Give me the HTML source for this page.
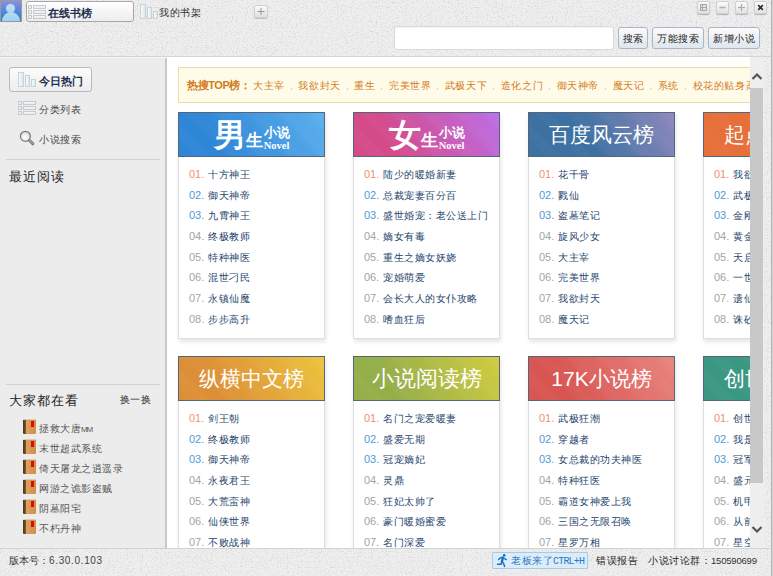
<!DOCTYPE html>
<html><head><meta charset="utf-8">
<style>
*{margin:0;padding:0;box-sizing:border-box}
html,body{width:773px;height:576px;overflow:hidden;font-family:"Liberation Sans",sans-serif;font-size:12px;color:#333}
body{position:relative;background:#eeeeee}
.a{position:absolute}
.tex{background:transparent}
#hdr{left:0;top:0;width:773px;height:57px}
#hdrline{left:0;top:56px;width:773px;height:1px;background:#d4d4d4}
#side{left:0;top:57px;width:165px;height:491px;background:#ececec}
#sideb{left:165px;top:57px;width:2px;height:491px;background:#c8c8c8}
#sideb2{left:166px;top:57px;width:1px;height:491px;background:#f4f4f4}
#main{left:167px;top:57px;width:583px;height:491px;background:#fff;overflow:hidden}
#rstrip{left:764px;top:57px;width:9px;height:491px}
#rborder{left:771px;top:0;width:2px;height:576px;background:linear-gradient(90deg,#b4b4b4 50%,#d4d4d4 50%)}
#status{left:0;top:548px;width:773px;height:28px}
#statusline{left:0;top:548px;width:773px;height:1px;background:#d2d2d2}
.card{position:absolute;width:147px;height:227px;background:#fff;border:1px solid #dedede;box-shadow:1px 3px 4px rgba(0,0,0,.10)}
.card .h{position:absolute;left:-1px;top:-1px;width:147px;height:45px;color:#fff;font-size:21px;text-align:center;line-height:44px;border:1px solid #55657a;overflow:hidden;white-space:nowrap}
.card ul{position:absolute;left:10px;top:51px;list-style:none}
.card li{height:20.7px;line-height:20.7px;font-size:10px;letter-spacing:0.5px;color:#25446c;white-space:nowrap}
.card li b{font-weight:normal;color:#a4a4a4;margin-right:4px;font-size:11px;letter-spacing:0}
.card li.r b{color:#f4906c}
.card li.bl b{color:#4e9ad6}
.btn{position:absolute;border:1px solid #a9b6c6;border-radius:3px;background:linear-gradient(#fbfbfb,#dfe6ee);font-size:10px;letter-spacing:0.5px;color:#222;text-align:center;line-height:21px;white-space:nowrap}
.wb{position:absolute;top:1px;width:13px;height:13px;border-radius:2px;background:linear-gradient(#fafafa,#e2e2e2);box-shadow:0 1px 1px rgba(0,0,0,.25);border:1px solid #d0d0d0}
.hot{font-size:10px;letter-spacing:0.6px;color:#d27b1e;line-height:14px;white-space:nowrap}
.hot .lbl{display:inline-block;width:66px;font-size:11px;letter-spacing:-0.4px}
.hot .sep{display:inline-block;width:13.5px;text-align:center;font-style:normal;color:#d9c9a9;font-size:9px}
.card .h:after{content:"";position:absolute;left:0;top:0;right:0;bottom:0;background:repeating-linear-gradient(45deg,rgba(255,255,255,0) 0,rgba(255,255,255,0) 12px,rgba(255,255,255,.025) 12px,rgba(255,255,255,.025) 22px)}
.card .h span{position:relative;z-index:1}
</style></head><body>
<svg class="a" style="left:0;top:0" width="773" height="576"><filter id="nz" x="0" y="0" width="100%" height="100%"><feTurbulence type="fractalNoise" baseFrequency="0.8" numOctaves="2" seed="5"/><feColorMatrix type="matrix" values="0 0 0 0 0  0 0 0 0 0  0 0 0 0 0  4 0 0 0 -2.1"/></filter><rect width="773" height="576" filter="url(#nz)" opacity="0.09"/></svg>
<div id="hdr" class="a tex"></div>
<div id="hdrline" class="a"></div>
<div class="a" style="left:0;top:57px;width:167px;height:1px;background:#f7f7f7;z-index:2"></div>

<!-- avatar -->
<div class="a" style="left:0;top:0;width:22px;height:22px;background:#9a9a9a;padding:1px">
  <div style="width:20px;height:20px;background:linear-gradient(#8a8ee0,#3f86d8 70%,#2e7ad0);position:relative;overflow:hidden">
    <div style="position:absolute;left:5px;top:3px;width:9px;height:9px;border-radius:50%;background:linear-gradient(#c4e0f4,#a8d4f4)"></div>
    <div style="position:absolute;left:1px;top:11px;width:18px;height:14px;border-radius:9px 9px 0 0;background:linear-gradient(#b4dcf4,#8ccef4)"></div>
  </div>
</div>
<!-- tab 1 -->
<div class="a" style="left:26px;top:1px;width:108px;height:21px;border:1px solid #a8a8a8;border-radius:3px;background:linear-gradient(#ffffff,#ededed)">
  <svg class="a" style="left:1px;top:3px" width="19" height="15" viewBox="0 0 19 15">
    <defs><linearGradient id="lg" x1="0" y1="0" x2="0" y2="1"><stop offset="0" stop-color="#f8fafa"/><stop offset="1" stop-color="#dcecf0"/></linearGradient></defs><g fill="url(#lg)" stroke="#c6cacc" stroke-width="1">
    <rect x="0.5" y="0.5" width="3" height="3"/><rect x="0.5" y="5.5" width="3" height="3"/><rect x="0.5" y="10.5" width="3" height="3"/>
    <rect x="5.5" y="0.5" width="12" height="3"/><rect x="5.5" y="5.5" width="12" height="3"/><rect x="5.5" y="10.5" width="12" height="3"/>
    </g>
  </svg>
  <div class="a" style="left:21px;top:4px;font-size:11px;font-weight:bold;color:#1e2f4e;line-height:14px">在线书榜</div>
</div>
<!-- tab 2 -->
<svg class="a" style="left:140px;top:4px" width="18" height="15" viewBox="0 0 18 15"><defs><linearGradient id="bg2" x1="0" y1="0" x2="1" y2="0"><stop offset="0" stop-color="#fbfdfd"/><stop offset="1" stop-color="#d6e6ec"/></linearGradient></defs><g fill="url(#bg2)" stroke="#cbd1d4" stroke-width="1">
    <rect x="0.5" y="0.5" width="5" height="14"/><rect x="7.5" y="3.5" width="4" height="11"/><rect x="13.5" y="7.5" width="4" height="7"/>
    </g></svg>
<div class="a" style="left:159px;top:6px;font-size:10px;letter-spacing:0.5px;color:#333;line-height:14px">我的书架</div>
<div class="a" style="left:254px;top:5px;width:14px;height:13px;border-radius:2px;background:linear-gradient(#fafafa,#e0e0e0);border:1px solid #cfcfcf;box-shadow:0 1px 1px rgba(0,0,0,.2)"><svg width="12" height="11" style="position:absolute;left:0;top:0"><line x1="2.5" y1="5.5" x2="9.5" y2="5.5" stroke="#999" stroke-width="1"/><line x1="6" y1="2" x2="6" y2="9" stroke="#999" stroke-width="1"/></svg></div>

<!-- window buttons -->
<div class="wb" style="left:697px"><svg width="11" height="11" style="position:absolute;left:0;top:0"><rect x="2.5" y="2.5" width="6" height="6" fill="#e4e4e4" stroke="#a8a8a8"/><line x1="4.5" y1="3" x2="4.5" y2="8" stroke="#a8a8a8"/><line x1="3" y1="5.5" x2="8" y2="5.5" stroke="#a8a8a8"/></svg></div>
<div class="wb" style="left:716px"><svg width="11" height="11" style="position:absolute;left:0;top:0"><line x1="2.5" y1="5.5" x2="8.5" y2="5.5" stroke="#b0b0b0" stroke-width="1.6"/></svg></div>
<div class="wb" style="left:735px"><svg width="11" height="11" style="position:absolute;left:0;top:0"><line x1="2" y1="5.5" x2="9" y2="5.5" stroke="#aaa" stroke-width="1.2"/><line x1="5.5" y1="2" x2="5.5" y2="9" stroke="#aaa" stroke-width="1.2"/></svg></div>
<div class="wb" style="left:754px"><svg width="11" height="11" style="position:absolute;left:0;top:0"><path d="M3.2 3.2 L7.8 7.8 M7.8 3.2 L3.2 7.8" stroke="#333" stroke-width="1.8"/></svg></div>

<!-- search -->
<div class="a" style="left:394px;top:26px;width:220px;height:24px;background:#fff;border:1px solid #dadada;border-radius:3px;box-shadow:inset 0 1px 1px rgba(0,0,0,.05)"></div>
<div class="btn" style="left:618px;top:27px;width:30px;height:22px">搜索</div>
<div class="btn" style="left:652px;top:27px;width:52px;height:22px">万能搜索</div>
<div class="btn" style="left:708px;top:27px;width:52px;height:22px">新增小说</div>

<div id="side" class="a"></div>
<div id="sideb" class="a"></div>


<!-- sidebar -->
<div class="a" style="left:9px;top:67px;width:83px;height:25px;border:1px solid #b9b9b9;border-radius:3px;background:linear-gradient(#fcfcfc,#ededed)">
  <svg class="a" style="left:8px;top:4px" width="18" height="15" viewBox="0 0 18 15"><defs><linearGradient id="bg1" x1="0" y1="0" x2="1" y2="0"><stop offset="0" stop-color="#fbfdfd"/><stop offset="1" stop-color="#d6e6ec"/></linearGradient></defs><g fill="url(#bg1)" stroke="#cbd1d4" stroke-width="1">
    <rect x="0.5" y="0.5" width="5" height="14"/><rect x="7.5" y="3.5" width="4" height="11"/><rect x="13.5" y="7.5" width="4" height="7"/>
    </g></svg>
  <div class="a" style="left:29px;top:6px;font-size:11px;font-weight:bold;color:#1e2f4e;line-height:14px">今日热门</div>
</div>
<svg class="a" style="left:18px;top:101px" width="19" height="15" viewBox="0 0 19 15">
  <defs><linearGradient id="lg2" x1="0" y1="0" x2="0" y2="1"><stop offset="0" stop-color="#f8fafa"/><stop offset="1" stop-color="#dcecf0"/></linearGradient></defs><g fill="url(#lg2)" stroke="#c6cacc" stroke-width="1">
    <rect x="0.5" y="0.5" width="3" height="3"/><rect x="0.5" y="5.5" width="3" height="3"/><rect x="0.5" y="10.5" width="3" height="3"/>
    <rect x="5.5" y="0.5" width="12" height="3"/><rect x="5.5" y="5.5" width="12" height="3"/><rect x="5.5" y="10.5" width="12" height="3"/>
    </g>
</svg>
<div class="a" style="left:39px;top:103px;font-size:10px;letter-spacing:0.5px;color:#444;line-height:14px">分类列表</div>
<svg class="a" style="left:19px;top:130px" width="16" height="16" viewBox="0 0 16 16">
  <defs><radialGradient id="mg" cx="0.45" cy="0.6" r="0.6"><stop offset="0" stop-color="#ffffff"/><stop offset="1" stop-color="#d8d8d8"/></radialGradient></defs>
  <line x1="10" y1="10" x2="13.8" y2="13.8" stroke="#6a6a6a" stroke-width="3" stroke-linecap="round"/>
  <line x1="10" y1="10" x2="13.8" y2="13.8" stroke="#a8a8a8" stroke-width="1.4" stroke-linecap="round"/>
  <circle cx="6.4" cy="6.3" r="5" fill="url(#mg)" stroke="#7a7a7a" stroke-width="1.2"/>
</svg>
<div class="a" style="left:39px;top:133px;font-size:10px;letter-spacing:0.5px;color:#444;line-height:14px">小说搜索</div>
<div class="a" style="left:6px;top:159px;width:154px;height:1px;background:#d2d2d2"></div>
<div class="a" style="left:9px;top:168px;font-size:13px;letter-spacing:1.1px;color:#222;line-height:17px">最近阅读</div>

<div class="a" style="left:6px;top:384px;width:154px;height:1px;background:#d2d2d2"></div>
<div class="a" style="left:9px;top:392px;font-size:13px;letter-spacing:1.1px;color:#222;line-height:17px">大家都在看</div>
<div class="a" style="left:120px;top:393px;font-size:10px;letter-spacing:0.3px;color:#333;line-height:14px">换一换</div>
<div class="a" style="left:22px;top:419px;line-height:20px;font-size:10px;letter-spacing:0.5px;color:#555">
  <div style="position:relative;height:20px;padding-left:17px"><i class="bk"></i>拯救大唐<span style="font-size:8px;letter-spacing:-1.2px">MM</span></div>
  <div style="position:relative;height:20px;padding-left:17px"><i class="bk"></i>末世超武系统</div>
  <div style="position:relative;height:20px;padding-left:17px"><i class="bk"></i>倚天屠龙之逍遥录</div>
  <div style="position:relative;height:20px;padding-left:17px"><i class="bk"></i>网游之诡影盗贼</div>
  <div style="position:relative;height:20px;padding-left:17px"><i class="bk"></i>阴墓阳宅</div>
  <div style="position:relative;height:20px;padding-left:17px"><i class="bk"></i>不朽丹神</div>
</div>
<style>
.bk{position:absolute;left:1px;top:0;width:13px;height:15px;background:linear-gradient(#d8cbb4,#d8cbb4 1.5px,transparent 1.5px),linear-gradient(90deg,#4a3418 0,#7a5830 3px,#e0a060 3px,#cf9048 100%);border-radius:1px}
.bk:after{content:"";position:absolute;left:8px;top:1.5px;width:3px;height:6.5px;background:#dc0a0a}
</style>

<div id="main" class="a">
  <!-- hot search -->
  <div class="a" style="left:11px;top:10px;width:600px;height:36px;background:#fffbe9;border:1px solid #f3d9a4"></div>
  <div class="a hot" style="left:20px;top:21px"><b class="lbl">热搜TOP榜：</b><span class="it">大主宰<i class="sep">，</i>我欲封天<i class="sep">，</i>重生<i class="sep">，</i>完美世界<i class="sep">，</i>武极天下<i class="sep">，</i>造化之门<i class="sep">，</i>御天神帝<i class="sep">，</i>魔天记<i class="sep">，</i>系统<i class="sep">，</i>校花的贴身高手</span></div>

  <!-- row 1 -->
  <div class="card" style="left:11px;top:55px">
    <div class="h" style="background:linear-gradient(60deg,#2e86d6 25%,#5cb0ee)">
      <span style="font-family:'Liberation Serif',serif;font-weight:bold;font-size:32px">男</span><span style="font-family:'Liberation Serif',serif;font-weight:bold;font-size:17px">生</span><span style="display:inline-block;font-family:'Liberation Serif',serif;font-weight:bold;line-height:10px;vertical-align:-3px;margin-left:1px"><span style="display:block;font-size:13px;line-height:13px">小说</span><span style="display:block;font-size:10.5px;line-height:10px;margin-top:2px">Novel</span></span>
    </div>
    <ul>
      <li class="r"><b>01.</b>十方神王</li><li class="bl"><b>02.</b>御天神帝</li><li class="bl"><b>03.</b>九霄神王</li><li><b>04.</b>终极教师</li><li><b>05.</b>特种神医</li><li><b>06.</b>混世刁民</li><li><b>07.</b>永镇仙魔</li><li><b>08.</b>步步高升</li>
    </ul>
  </div>
  <div class="card" style="left:186px;top:55px">
    <div class="h" style="background:linear-gradient(60deg,#d54a88 25%,#bc6ee8)">
      <span style="font-family:'Liberation Serif',serif;font-weight:bold;font-size:32px">女</span><span style="font-family:'Liberation Serif',serif;font-weight:bold;font-size:17px">生</span><span style="display:inline-block;font-family:'Liberation Serif',serif;font-weight:bold;line-height:10px;vertical-align:-3px;margin-left:1px"><span style="display:block;font-size:13px;line-height:13px">小说</span><span style="display:block;font-size:10.5px;line-height:10px;margin-top:2px">Novel</span></span>
    </div>
    <ul>
      <li class="r"><b>01.</b>陆少的暖婚新妻</li><li class="bl"><b>02.</b>总裁宠妻百分百</li><li class="bl"><b>03.</b>盛世婚宠：老公送上门</li><li><b>04.</b>嫡女有毒</li><li><b>05.</b>重生之嫡女妖娆</li><li><b>06.</b>宠婚萌爱</li><li><b>07.</b>会长大人的女仆攻略</li><li><b>08.</b>嗜血狂后</li>
    </ul>
  </div>
  <div class="card" style="left:361px;top:55px">
    <div class="h" style="background:linear-gradient(60deg,#3d71a2 40%,#9088bc)">百度风云榜</div>
    <ul>
      <li class="r"><b>01.</b>花千骨</li><li class="bl"><b>02.</b>戮仙</li><li class="bl"><b>03.</b>盗墓笔记</li><li><b>04.</b>旋风少女</li><li><b>05.</b>大主宰</li><li><b>06.</b>完美世界</li><li><b>07.</b>我欲封天</li><li><b>08.</b>魔天记</li>
    </ul>
  </div>
  <div class="card" style="left:536px;top:55px">
    <div class="h" style="background:linear-gradient(60deg,#e76f3a 50%,#ec8046);text-indent:0">起点中文榜</div>
    <ul>
      <li class="r"><b>01.</b>我欲封天</li><li class="bl"><b>02.</b>武极天下</li><li class="bl"><b>03.</b>金刚不坏</li><li><b>04.</b>黄金瞳</li><li><b>05.</b>天启之门</li><li><b>06.</b>一世之尊</li><li><b>07.</b>遗仙</li><li><b>08.</b>诛砂</li>
    </ul>
  </div>

  <!-- row 2 -->
  <div class="card" style="left:11px;top:299px">
    <div class="h" style="background:linear-gradient(60deg,#dc8f36 25%,#ecc43e)">纵横中文榜</div>
    <ul>
      <li class="r"><b>01.</b>剑王朝</li><li class="bl"><b>02.</b>终极教师</li><li class="bl"><b>03.</b>御天神帝</li><li><b>04.</b>永夜君王</li><li><b>05.</b>大荒蛮神</li><li><b>06.</b>仙侠世界</li><li><b>07.</b>不败战神</li><li><b>08.</b>武极天下</li>
    </ul>
  </div>
  <div class="card" style="left:186px;top:299px">
    <div class="h" style="background:linear-gradient(60deg,#94ae4a 25%,#d2cc40);font-size:22px">小说阅读榜</div>
    <ul>
      <li class="r"><b>01.</b>名门之宠爱暖妻</li><li class="bl"><b>02.</b>盛爱无期</li><li class="bl"><b>03.</b>冠宠嫡妃</li><li><b>04.</b>灵鼎</li><li><b>05.</b>狂妃太帅了</li><li><b>06.</b>豪门暖婚蜜爱</li><li><b>07.</b>名门深爱</li><li><b>08.</b>独家宠爱</li>
    </ul>
  </div>
  <div class="card" style="left:361px;top:299px">
    <div class="h" style="background:linear-gradient(60deg,#d85552 25%,#e8857e)">17K小说榜</div>
    <ul>
      <li class="r"><b>01.</b>武极狂潮</li><li class="bl"><b>02.</b>穿越者</li><li class="bl"><b>03.</b>女总裁的功夫神医</li><li><b>04.</b>特种狂医</li><li><b>05.</b>霸道女神爱上我</li><li><b>06.</b>三国之无限召唤</li><li><b>07.</b>星罗万相</li><li><b>08.</b>万古至尊</li>
    </ul>
  </div>
  <div class="card" style="left:536px;top:299px">
    <div class="h" style="background:linear-gradient(60deg,#3a9782 50%,#42a4a0)">创世中文榜</div>
    <ul>
      <li class="r"><b>01.</b>创世神尊</li><li class="bl"><b>02.</b>我是至尊</li><li class="bl"><b>03.</b>冠军之心</li><li><b>04.</b>盛元天下</li><li><b>05.</b>机甲天下</li><li><b>06.</b>从前有座灵剑山</li><li><b>07.</b>星空之上</li><li><b>08.</b>大圣传</li>
    </ul>
  </div>
</div>

<!-- scrollbar -->
<div class="a" style="left:750px;top:57px;width:14px;height:491px;background:#eeeeee"></div>
<svg class="a" style="left:751px;top:71px" width="12" height="10"><path d="M1.5 8 L6 3.5 L10.5 8" fill="none" stroke="#555" stroke-width="2.2"/></svg>
<div class="a" style="left:750px;top:88px;width:13px;height:395px;background:#c8c8c8"></div>
<svg class="a" style="left:751px;top:525px" width="12" height="10"><path d="M1.5 2 L6 6.5 L10.5 2" fill="none" stroke="#555" stroke-width="2.2"/></svg>
<div id="rstrip" class="a tex"></div>
<div id="rborder" class="a"></div>

<!-- status -->
<div id="status" class="a tex"></div>
<div id="statusline" class="a"></div>
<div class="a" style="left:9px;top:554px;font-size:10px;color:#333;line-height:14px;white-space:nowrap">版本号：<span style="font-size:10px;letter-spacing:0.65px;color:#444">6.30.0.103</span></div>
<div class="a" style="left:492px;top:552px;width:96px;height:17px;border:1px solid #a6cbe8;background:#dcedf9;border-radius:1px">
  <svg class="a" style="left:-1px;top:-1px" width="22" height="18" viewBox="0 0 22 18"><g fill="none" stroke="#1670c4" stroke-linecap="round" stroke-linejoin="round"><circle cx="12.2" cy="3.4" r="1.3" fill="#1670c4" stroke="none"/><path d="M10.8 5.6 L10 9.6" stroke-width="2.4"/><path d="M10.6 5.4 L8.6 5.6 L6.6 7.6" stroke-width="1.4"/><path d="M11 5.6 L12.6 6.6 L14.4 7.6" stroke-width="1.3"/><path d="M10 9.4 L9 12.2 L5.6 12.2" stroke-width="1.6"/><path d="M10.2 9.6 L11.6 11.6 L12.6 14.4" stroke-width="1.5"/></g></svg>
  <div class="a" style="left:18px;top:1px;font-size:10px;letter-spacing:0.5px;color:#2a78c4;line-height:14px;white-space:nowrap">老板来了<span style="font-family:'Liberation Mono',monospace;font-size:10px;letter-spacing:-0.8px">CTRL+H</span></div>
</div>
<div class="a" style="left:596px;top:554px;font-size:10px;letter-spacing:0.5px;color:#222;line-height:14px">错误报告</div>
<div class="a" style="left:648px;top:554px;font-size:10px;letter-spacing:0.5px;color:#222;line-height:14px;white-space:nowrap">小说讨论群：<span style="font-size:9.5px;letter-spacing:-0.2px;color:#333">150590699</span></div>
</body></html>
